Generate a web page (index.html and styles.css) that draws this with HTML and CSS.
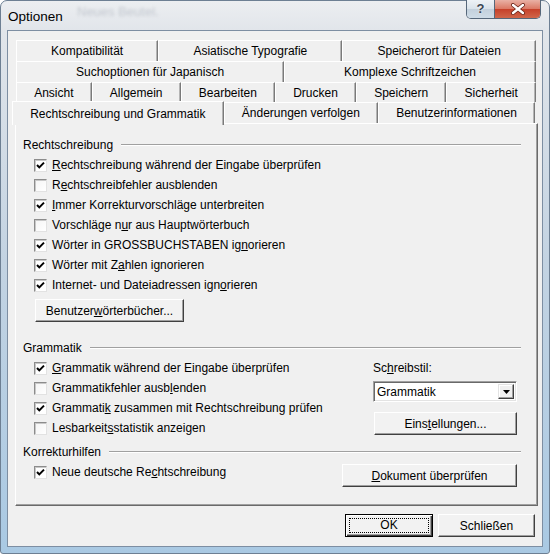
FILE: index.html
```html
<!DOCTYPE html>
<html lang="de">
<head>
	<meta charset="UTF-8">
	<title>Optionen</title>
	<link rel="stylesheet" href="styles.css">
</head>
<body>

<div class="window">
	<div class="titlebar">
		<span class="title">Optionen</span>
		<span class="ghost">Neues Beutel.</span>
		<div class="caption-btns">
			<span class="cap-help">?</span>
			<span class="cap-close">
				<svg width="16" height="12" viewBox="0 0 16 12">
					<path d="M3 2 L13 10 M13 2 L3 10" stroke="#6a2418" stroke-width="4" stroke-linecap="round"/>
					<path d="M3 2 L13 10 M13 2 L3 10" stroke="#fff" stroke-width="2.4" stroke-linecap="round"/>
				</svg>
			</span>
		</div>
	</div>

	<div class="client">
		<div class="tabs">
			<div class="tab-row">
				<div class="tab">Kompatibilität</div>
				<div class="tab">Asiatische Typografie</div>
				<div class="tab">Speicherort für Dateien</div>
			</div>
			<div class="tab-row">
				<div class="tab">Suchoptionen für Japanisch</div>
				<div class="tab">Komplexe Schriftzeichen</div>
			</div>
			<div class="tab-row low">
				<div class="tab">Ansicht</div>
				<div class="tab">Allgemein</div>
				<div class="tab">Bearbeiten</div>
				<div class="tab">Drucken</div>
				<div class="tab">Speichern</div>
				<div class="tab">Sicherheit</div>
			</div>
			<div class="tab-row front">
				<div class="tab selected">Rechtschreibung und Grammatik</div>
				<div class="tab">Änderungen verfolgen</div>
				<div class="tab">Benutzerinformationen</div>
			</div>
		</div>

		<div class="panel">
			<!-- Rechtschreibung -->
			<div class="group-head"><span>Rechtschreibung</span><i></i></div>
			<div class="check-row"><span class="box on"></span><span><u>R</u>echtschreibung während der Eingabe überprüfen</span></div>
			<div class="check-row"><span class="box"></span><span>R<u>e</u>chtschreibfehler ausblenden</span></div>
			<div class="check-row"><span class="box on"></span><span><u>I</u>mmer Korrekturvorschläge unterbreiten</span></div>
			<div class="check-row"><span class="box"></span><span>Vorschläge n<u>u</u>r aus Hauptwörterbuch</span></div>
			<div class="check-row"><span class="box on"></span><span>Wörter in GROSSBUCHSTABEN ig<u>n</u>orieren</span></div>
			<div class="check-row"><span class="box on"></span><span>Wörter mit Z<u>a</u>hlen ignorieren</span></div>
			<div class="check-row"><span class="box on"></span><span>Internet- und Dateiadressen ign<u>o</u>rieren</span></div>
			<button class="btn dict-btn">Benutzer<u>w</u>örterbücher...</button>

			<!-- Grammatik -->
			<div class="group-head gap"><span>Grammatik</span><i></i></div>
			<div class="grammar">
				<div class="grammar-checks">
					<div class="check-row"><span class="box on"></span><span><u>G</u>rammatik während der Eingabe überprüfen</span></div>
					<div class="check-row"><span class="box"></span><span>Grammatikfehler ausb<u>l</u>enden</span></div>
					<div class="check-row"><span class="box on"></span><span>Grammati<u>k</u> zusammen mit Rechtschreibung prüfen</span></div>
					<div class="check-row"><span class="box"></span><span>Lesbarkeit<u>s</u>statistik anzeigen</span></div>
				</div>
				<div class="style-col">
					<div class="style-label">Sc<u>h</u>reibstil:</div>
					<div class="combo">
						<span class="combo-text">Grammatik</span>
						<span class="combo-arrow"></span>
					</div>
					<button class="btn settings-btn">Eins<u>t</u>ellungen...</button>
				</div>
			</div>

			<!-- Korrekturhilfen -->
			<div class="group-head small-gap"><span>Korrekturhilfen</span><i></i></div>
			<div class="aids">
				<div class="check-row"><span class="box on"></span><span>Neue deutsche Re<u>c</u>htschreibung</span></div>
				<button class="btn doc-btn"><u>D</u>okument überprüfen</button>
			</div>
		</div>

		<div class="footer">
			<button class="btn default-btn"><span>OK</span></button>
			<button class="btn close-btn">Schließen</button>
		</div>
	</div>
</div>

</body>
</html>
```

FILE: styles.css
```css
body {
	margin: 0;
	font-family: "Liberation Sans", Arial, sans-serif;
	font-size: 12px;
	color: #000;
	background: #fff;
}
.window {
	width: 550px;
	height: 554px;
	box-sizing: border-box;
	border: 1px solid #6d7f93;
	border-radius: 7px 7px 3px 3px;
	background: linear-gradient(to bottom, #eceef1 0, #e1e5ea 30px, #c3d3e2 260px, #a9c9e3 554px);
	display: flex;
	flex-direction: column;
	position: relative;
}

/* title bar */
.titlebar {
	height: 29px;
	display: flex;
	align-items: flex-start;
	position: relative;
}
.title {
	font-size: 13.5px;
	margin: 8px 0 0 7px;
}
.ghost {
	position: absolute;
	left: 76px;
	top: 3px;
	font-size: 13px;
	color: rgba(110, 120, 135, 0.3);
	filter: blur(1.4px);
}
.caption-btns {
	margin: -1px 8px 0 auto;
	display: flex;
	border: 1px solid #56677a;
	border-top: none;
	border-radius: 0 0 5px 5px;
	overflow: hidden;
	height: 18px;
}
.cap-help {
	width: 27px;
	text-align: center;
	font-weight: bold;
	font-size: 13px;
	line-height: 18px;
	color: #3c4654;
	text-shadow: 0 0 2px #fff;
	background: linear-gradient(to bottom, #eef2f6 0, #d9e2ea 50%, #c3d0dc 51%, #cfdce7 100%);
	border-right: 1px solid #56677a;
}
.cap-close {
	width: 45px;
	display: flex;
	align-items: center;
	justify-content: center;
	background: linear-gradient(to bottom, #e9b1a5 0, #db7a66 48%, #c6412a 52%, #d0664a 100%);
}

/* client area */
.client {
	flex: 1;
	margin: 0 6px 6px 6px;
	border: 1px solid #7d8ea2;
	background: #f0f0f0;
	padding: 9px 4px 0 7px;
}

/* tabs */
.tabs {
	margin: 0 2px 0 1px;
}
.tab-row {
	display: flex;
	height: 21px;
}
.tab-row.low {
	height: 20px;
}
.tab {
	flex: 1 1 auto;
	display: flex;
	align-items: center;
	justify-content: center;
	white-space: nowrap;
	padding: 0 2px;
	border-top: 1px solid #fff;
	border-left: 1px solid #fff;
	border-right: 1px solid #7a7a7a;
	box-shadow: inset -1px 0 0 #b4b4b4;
}
.tab-row.front {
	margin-right: 1px;
}
.tab.selected {
	position: relative;
	z-index: 1;
	margin: -1px 0 -2px -4px;
	background: #f0f0f0;
}

/* tab page */
.panel {
	height: 383px;
	box-sizing: border-box;
	border: 1px solid;
	border-color: #fff #6a6a6a #6a6a6a #fff;
	box-shadow: inset -1px -1px 0 #a0a0a0;
	padding: 11px 16px 0 7px;
}
.group-head {
	display: flex;
	align-items: center;
	height: 20px;
}
.group-head i {
	flex: 1;
	margin-left: 8px;
	border-top: 1px solid #a0a0a0;
	border-bottom: 1px solid #fff;
}
.group-head.gap {
	margin-top: 16px;
}
.group-head.small-gap {
	margin-top: 4px;
}
.check-row {
	display: flex;
	align-items: center;
	height: 20px;
	padding-left: 11px;
	white-space: nowrap;
}
.box {
	width: 13px;
	height: 13px;
	box-sizing: border-box;
	margin-right: 5px;
	border: 1px solid;
	border-color: #8c8c8c #e2e2e2 #e2e2e2 #8c8c8c;
	box-shadow: inset 1px 1px 0 #c8c8c8;
	background: linear-gradient(135deg, #f4f4f4, #fff);
}
.box.on {
	background: #fff url("data:image/svg+xml,%3Csvg xmlns='http://www.w3.org/2000/svg' width='11' height='11'%3E%3Cpath d='M2 5 L4.3 7.4 L9 2.6' fill='none' stroke='%23000' stroke-width='2'/%3E%3C/svg%3E") no-repeat center;
}
u {
	text-decoration: underline;
	text-underline-offset: 1px;
}

/* buttons */
.btn {
	font: inherit;
	color: #000;
	height: 23px;
	padding: 0;
	background: #f2f2f2;
	border: 1px solid;
	border-color: #fff #404040 #404040 #fff;
	box-shadow: inset -1px -1px 0 #a0a0a0;
	cursor: pointer;
}
.dict-btn {
	display: block;
	width: 149px;
	margin: 4px 0 0 12px;
}

/* Grammatik */
.grammar {
	display: flex;
}
.grammar-checks {
	flex: 1;
}
.style-col {
	width: 145px;
	margin-right: 4px;
	display: flex;
	flex-direction: column;
}
.style-label {
	height: 20px;
	line-height: 20px;
	padding-left: 1px;
}
.combo {
	margin: 3px 0 0 1px;
	height: 21px;
	box-sizing: border-box;
	border: 1px solid;
	border-color: #a0a0a0 #fff #fff #a0a0a0;
	box-shadow: inset 1px 1px 0 #696969, inset -1px -1px 0 #e3e3e3;
	background: #fff;
	display: flex;
	align-items: center;
	padding: 0 2px 0 3px;
}
.combo-text {
	flex: 1;
}
.combo-arrow {
	width: 16px;
	height: 15px;
	box-sizing: border-box;
	border: 1px solid;
	border-color: #e3e3e3 #404040 #404040 #e3e3e3;
	box-shadow: inset -1px -1px 0 #a0a0a0, inset 1px 1px 0 #fff;
	background: #f0f0f0 url("data:image/svg+xml,%3Csvg xmlns='http://www.w3.org/2000/svg' width='7' height='4'%3E%3Cpath d='M0 0 H7 L3.5 4 Z' fill='%23000'/%3E%3C/svg%3E") no-repeat center;
}
.settings-btn {
	margin: 10px 0 0 2px;
	width: 143px;
}

/* Korrekturhilfen */
.aids {
	display: flex;
	justify-content: space-between;
	align-items: flex-start;
}
.doc-btn {
	width: 175px;
	margin: 2px 4px 0 0;
}

/* dialog buttons */
.footer {
	display: flex;
	justify-content: flex-end;
	gap: 5px;
	margin-top: 8px;
	padding-right: 3px;
}
.default-btn {
	width: 88px;
	border: 1px solid #000;
	box-shadow: inset 1px 1px 0 #fff, inset -1px -1px 0 #404040, inset -2px -2px 0 #a0a0a0;
	padding: 3px;
}
.default-btn span {
	display: block;
	height: 100%;
	box-sizing: border-box;
	line-height: 13px;
	border: 1px dotted #000;
}
.close-btn {
	width: 97px;
}
```
